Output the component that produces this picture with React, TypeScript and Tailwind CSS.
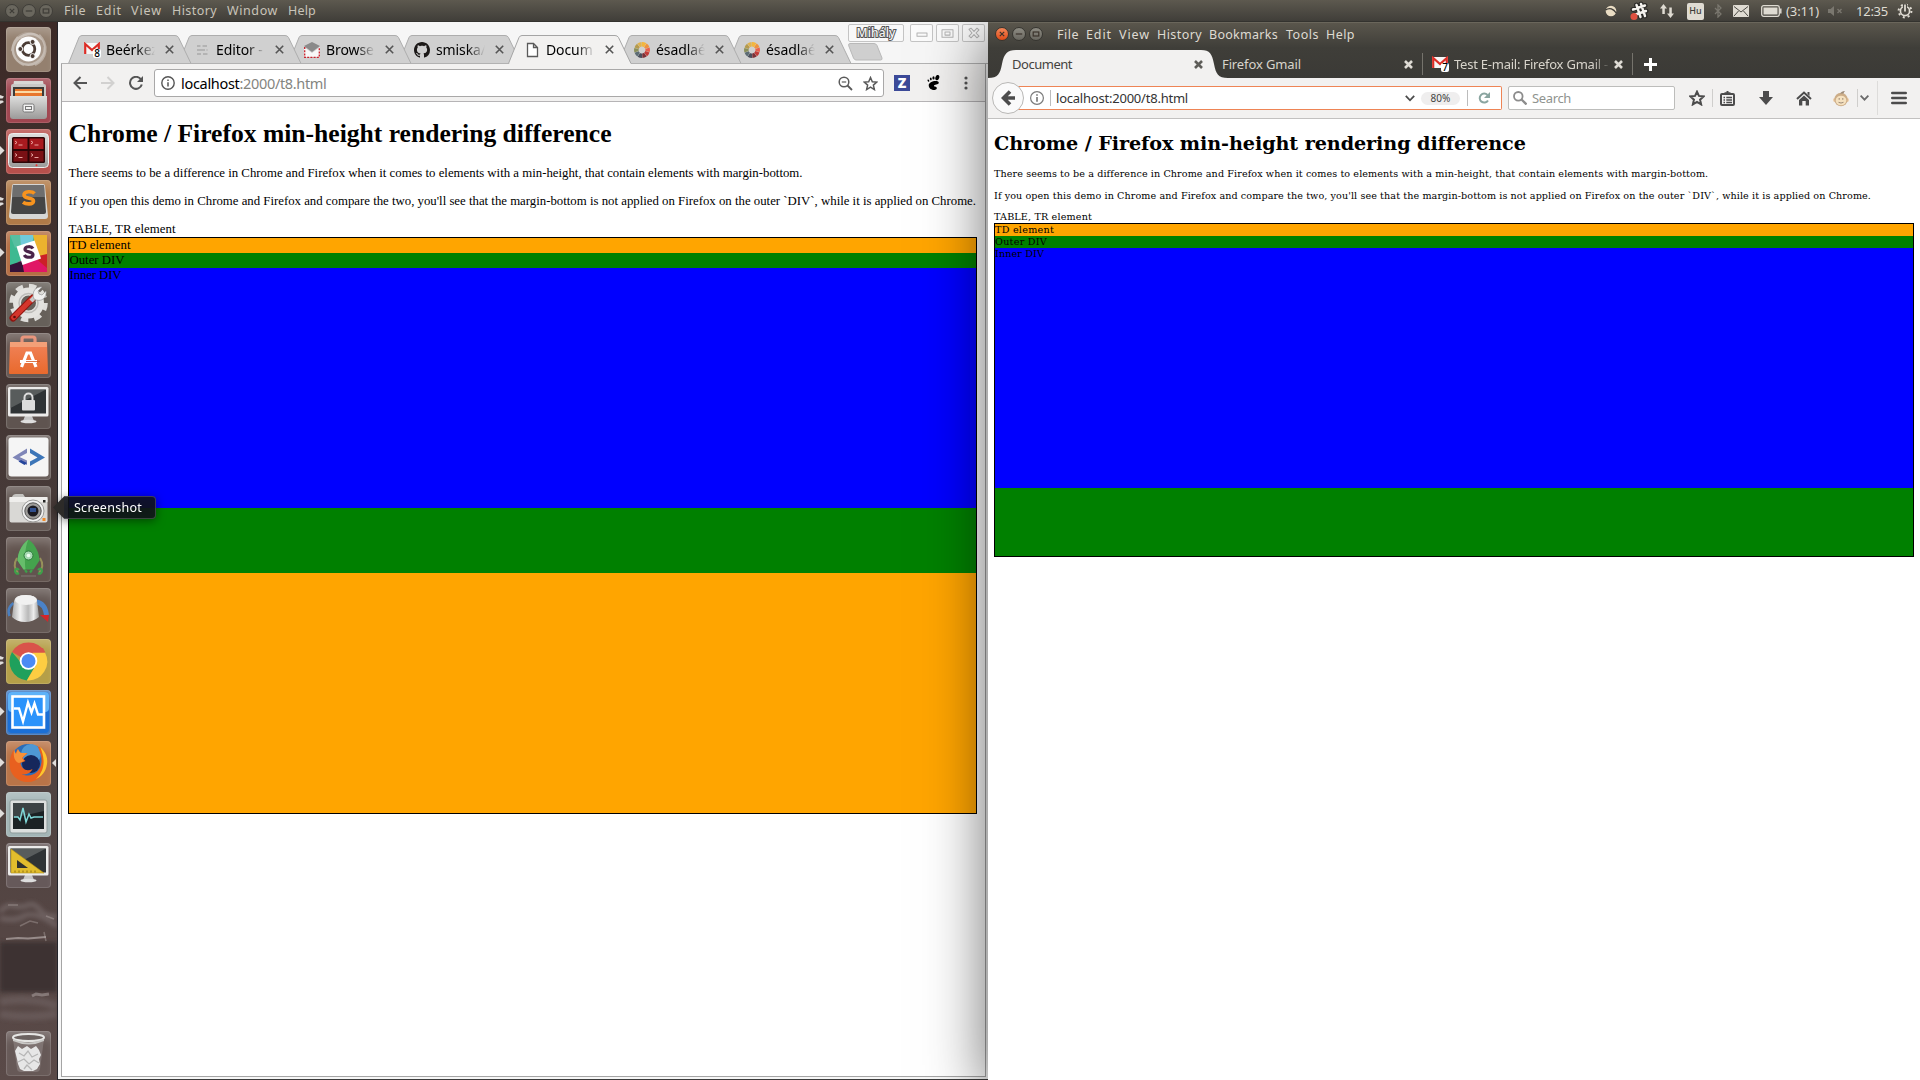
import React, { useLayoutEffect, useRef, useState } from "react";

/** Single line of text whose tracking is adjusted so that it spans `w` pixels. */
function Fit({ w, children, className = "" }: { w: number; children: string; className?: string }) {
  const ref = useRef<HTMLSpanElement>(null);
  const [ls, setLs] = useState(0);
  useLayoutEffect(() => {
    if (ref.current) {
      const natural = ref.current.getBoundingClientRect().width;
      setLs((w - natural) / children.length);
    }
  }, []);
  return (
    <span ref={ref} className={"inline-block whitespace-pre " + className} style={{ letterSpacing: ls + "px" }}>
      {children}
    </span>
  );
}

function WindowButtons({ active = false }: { active?: boolean }) {
  return (
    <svg width="50" height="16" viewBox="0 0 50 16" fill="none">
      <defs>
        <linearGradient id="closeOrange" x1="0" y1="0" x2="0" y2="1">
          <stop offset="0" stopColor="#f58a5c" />
          <stop offset="1" stopColor="#dd4814" />
        </linearGradient>
        <linearGradient id="btnGrey" x1="0" y1="0" x2="0" y2="1">
          <stop offset="0" stopColor="#8f8d84" />
          <stop offset="1" stopColor="#67655e" />
        </linearGradient>
      </defs>
      {[8, 25, 42].map((cx, i) => (
        <circle
          key={cx}
          cx={cx}
          cy="8"
          r="6.5"
          fill={active ? (i === 0 ? "url(#closeOrange)" : "url(#btnGrey)") : "#6a675e"}
          stroke={active ? "#35342f" : "#3f3d38"}
        />
      ))}
      <g stroke={active ? "#3b332c" : "#3f3d38"} strokeWidth="1.2">
        <path d="M5.8 5.8l4.4 4.4M10.2 5.8l-4.4 4.4" />
        <path d="M21.8 8h6.4" />
        <rect x="39.2" y="6" width="5.6" height="4" />
      </g>
    </svg>
  );
}

function Tray() {
  return (
    <div className="flex h-[20px] items-center">
      <div className="w-[27px]">
        <svg width="14" height="14" viewBox="0 0 14 14">
          <circle cx="7" cy="7" r="5.3" fill="#e9dcc3" />
          <path d="M1.6 6c4-3 8-1 10.6 3" stroke="#3f3d38" strokeWidth="1.3" fill="none" />
        </svg>
      </div>
      <div className="w-[29px]">
        <svg className="-ml-[2px]" width="20" height="20" viewBox="0 0 20 20">
          <g stroke="#2b2a27" strokeWidth="5" strokeLinecap="round">
            <path d="M7.5 4l4 12M12 3l4 12M4 8.500l12-4M5 14l12-4" />
          </g>
          <g stroke="#f4f2ee" strokeWidth="2.400" strokeLinecap="round">
            <path d="M7.500 4l4 12M12 3l4 12M4 8.500l12-4M5 14l12-4" />
          </g>
          <circle cx="5" cy="15.500" r="3.500" fill="#e05040" />
        </svg>
      </div>
      <div className="w-[27px]">
        <svg className="-ml-[1px]" width="16" height="16" viewBox="0 0 16 16" fill="#dfdbd2">
          <path d="M4.500 1L8 5.500H5.800V11H3.300V5.500H1zM11.500 15L15 10.500H12.800V4.500H10.300V10.500H8z" />
        </svg>
      </div>
      <div className="w-[27px]">
        <div className="flex h-[17px] w-[17px] items-center justify-center rounded-[2px] bg-[#dfdbd2] text-[9px] font-medium text-[#3c3b37]">
          Hu
        </div>
      </div>
      <div className="w-[19px]">
        <svg width="8" height="14" viewBox="0 0 8 14" fill="none" stroke="#7a776f" strokeWidth="1.300">
          <path d="M1 4l6 6-3 3V1l3 3-6 6" />
        </svg>
      </div>
      <div className="w-[28px]">
        <svg width="16" height="12" viewBox="0 0 16 12">
          <rect width="16" height="12" rx="1" fill="#dfdbd2" />
          <path d="M1 1.500l7 5.500 7-5.500M1 11l4.500-5M15 11l-4.500-5" stroke="#4a4842" fill="none" />
        </svg>
      </div>
      <div className="w-[25px]">
        <svg width="21" height="12" viewBox="0 0 21 12" fill="none">
          <rect x=".7" y=".7" width="17.600" height="10.600" rx="2" stroke="#dfdbd2" strokeWidth="1.300" />
          <rect x="2.500" y="2.500" width="14" height="7" fill="#dfdbd2" />
          <path d="M19.800 3.500v5" stroke="#dfdbd2" strokeWidth="1.500" />
        </svg>
      </div>
      <div className="w-[42px]">
        <Fit w={33}>(3:11)</Fit>
      </div>
      <div className="w-[28px]">
        <svg width="16" height="12" viewBox="0 0 16 12">
          <path d="M0 4h2.500L6 1v10L2.500 8H0z" fill="#7a776f" />
          <path d="M9.500 4l4 4M13.500 4l-4 4" stroke="#7a776f" strokeWidth="1.400" />
        </svg>
      </div>
      <div className="w-[41px]">
        <Fit w={32}>12:35</Fit>
      </div>
      <svg width="16" height="16" viewBox="0 0 16 16" fill="none" stroke="#dfdbd2">
        <circle cx="8" cy="8" r="4.600" strokeWidth="1.700" />
        <circle cx="8" cy="8" r="6.400" strokeWidth="2" strokeDasharray="2 3.030" />
        <path d="M8 1v7" stroke="#4a4842" strokeWidth="4" />
        <path d="M8 1.500V8.500" strokeWidth="1.800" />
      </svg>
    </div>
  );
}

function TopBar() {
  return (
    <header className="flex h-[22px] shrink-0 border-b border-[#34332f] bg-linear-to-b from-[#5d594f] to-[#403e39] pt-px text-[12.5px] leading-[20px] text-[#c9c4b9]">
      <div className="ml-[4px] flex h-[19px] w-[60px] items-center">
        <WindowButtons />
      </div>
      <div className="w-[32px]"><Fit w={22}>File</Fit></div>
      <div className="w-[35px]"><Fit w={26}>Edit</Fit></div>
      <div className="w-[41px]"><Fit w={31}>View</Fit></div>
      <div className="w-[55px]"><Fit w={45}>History</Fit></div>
      <div className="w-[61px]"><Fit w={51}>Window</Fit></div>
      <div><Fit w={28}>Help</Fit></div>
      <div className="ml-auto mr-[7px] w-[309px] text-[13px] text-[#dfdbd2]">
        <Tray />
      </div>
    </header>
  );
}

/* ---------- Launcher ---------- */

const ubuntu = (
  <>
    <circle cx="22.500" cy="22" r="17" fill="#fff" opacity=".18" />
    <path d="M6 24C8 8 26 2 36 12M39 20c0 14-14 22-26 15M12 10c-10 12-4 24 6 28M33 8c10 10 8 24-4 30" stroke="#fff" strokeOpacity=".35" strokeWidth="2.500" fill="none" />
    <circle cx="22.500" cy="22" r="12.500" fill="#fdfdfd" />
    <circle cx="22.500" cy="22" r="6.300" fill="none" stroke="#4a3b34" strokeWidth="2.800" />
    <g fill="#4a3b34" stroke="#fdfdfd" strokeWidth="1">
      <circle cx="14.300" cy="22" r="2.500" />
      <circle cx="26.600" cy="14.900" r="2.500" />
      <circle cx="26.600" cy="29.100" r="2.500" />
    </g>
  </>
);

const files = (
  <>
    <path d="M8 3h29l3 16H5z" fill="#d8d7d5" />
    <rect x="5" y="6" width="35" height="15" rx="2" fill="#c9c8c6" />
    <rect x="7" y="9" width="31" height="10" fill="#3c3a38" />
    <rect x="9" y="11" width="27" height="8" fill="#e8762c" />
    <rect x="9" y="13" width="27" height="2" fill="#fbd9a4" />
    <path d="M4 18h37v20a3 3 0 0 1-3 3H7a3 3 0 0 1-3-3z" fill="url(#metal)" />
    <rect x="17" y="26" width="11" height="8" rx="1.500" fill="#f2f2f2" stroke="#777" />
    <rect x="19.500" y="28.500" width="6" height="3" fill="none" stroke="#777" />
  </>
);

const terminals = (
  <>
    <rect x="2.500" y="4.500" width="40" height="34" rx="4" fill="url(#metal)" stroke="#eee" />
    <rect x="6" y="8" width="33" height="26" rx="1.500" fill="#2c0507" />
    <g fill="#a81a1f">
      <rect x="7.500" y="9.500" width="14" height="10.500" />
      <rect x="23.500" y="9.500" width="14" height="10.500" />
    </g>
    <g fill="#7a1014">
      <rect x="7.500" y="22" width="14" height="10.500" />
      <rect x="23.500" y="22" width="14" height="10.500" />
    </g>
    <path d="M9 12l2 1.500-2 1.500M12.500 16h4M25 12l2 1.500-2 1.500M28.500 16h4M9 24.500l2 1.500-2 1.500M12.500 28.500h4M25 24.500l2 1.500-2 1.500M28.500 28.500h4" stroke="#f5b5b0" strokeWidth=".9" fill="none" />
    <circle cx="30.500" cy="36.300" r="1" fill="#e33" />
  </>
);

const sublime = (
  <>
    <path d="M6 6q0-2 2-2h29q2 0 2 2l3 30q0 3-3 3H6q-3 0-3-3z" fill="#d6d6d4" />
    <path d="M7 5h31l2 27q0 2-2 2H7q-2 0-2-2z" fill="#454545" />
    <path d="M7 5h31l1 12H6z" fill="#8a8a8a" opacity=".6" />
    <path d="M28.500 13.500c-2-2.200-10.500-2.800-10.500 1.500 0 4.600 10 2 9.500 6.200-.4 3.600-7.500 3.200-10.500 1" stroke="#f7931e" strokeWidth="3.600" fill="none" />
  </>
);

const slack = (
  <>
    <rect x="4" y="4" width="37" height="37" rx="2" fill="#3eb991" />
    <path d="M4 4h12l2 10-9 3z" fill="#57bfa0" />
    <path d="M14 4h14l-2 9-11 3z" fill="#70cadb" />
    <path d="M27 4h14v22l-8 3-4-16z" fill="#ecb22e" />
    <path d="M12 31l21-6 8 3v13H16z" fill="#e01765" />
    <path d="M4 34l12-4 2 11H4z" fill="#361238" />
    <path d="M28 26l13-3v14z" fill="#cc2027" />
    <path d="M10.500 15.500l18-6 6.500 18-18.500 6.500z" fill="#fff" />
    <path d="M27 17.500c-1.500-2.500-8-2.500-8 .8 0 3.500 8 1.600 8 5.400 0 3.500-7 3.300-8.700.2" stroke="#4b244a" strokeWidth="3.200" fill="none" />
  </>
);

const settings = (
  <>
    <circle cx="22.500" cy="21" r="16.300" fill="none" stroke="#deddda" strokeWidth="6" strokeDasharray="7 5.800" />
    <circle cx="22.500" cy="21" r="11.500" fill="none" stroke="#e3e2df" strokeWidth="8" />
    <circle cx="22.500" cy="21" r="9.500" fill="none" stroke="#bdbcb9" strokeWidth="1.500" />
    <path d="M7 36L27 16" stroke="#8e1510" strokeWidth="7" strokeLinecap="round" />
    <path d="M7.500 35.500L27 16" stroke="#d4362c" strokeWidth="5" strokeLinecap="round" />
    <path d="M25 19l6-6" stroke="#c9c9c9" strokeWidth="4.500" />
    <path d="M28 17c-3-7 2-13 8-12l-4 4 1 3 3 1 4-4c1 7-5 12-12 8z" fill="#efefef" stroke="#999" strokeWidth=".7" />
    <circle cx="8.500" cy="35" r="1.300" fill="#5c0d0a" />
  </>
);

const software = (
  <>
    <path d="M16 13V6q0-2 2-2h9q2 0 2 2v7" stroke="#e8957c" strokeWidth="3.200" fill="none" />
    <path d="M4 9h37l1 31q0 1-1 1H4q-1 0-1-1z" fill="url(#bag)" />
    <path d="M4 9h37v5H4z" fill="#f3a078" />
    <path d="M15.500 34l5.500-14h3.500l5.500 14M14 28.500h17" stroke="#fff" strokeWidth="3.200" fill="none" />
    <path d="M20 28.500h14" stroke="#d4551e" strokeWidth=".8" />
  </>
);

const monitorBase = (
  <>
    <path d="M19 32h7l2 5h-11z" fill="#c6c6c6" />
    <ellipse cx="22.500" cy="37.500" rx="8" ry="1.800" fill="#dedede" />
    <rect x="2" y="3" width="40.500" height="29.500" rx="1.500" fill="#ecebea" />
    <rect x="4.500" y="5.500" width="35.500" height="24" fill="#2f3335" />
    <path d="M4.500 5.500H40L4.500 24z" fill="#6a6d6e" opacity=".7" />
  </>
);

const lock = (
  <>
    {monitorBase}
    <rect x="16" y="16" width="13" height="10.500" rx="1" fill="#dcdcdc" />
    <path d="M18.500 16v-2.500a4 4 0 0 1 8 0V16" stroke="#dcdcdc" strokeWidth="2" fill="none" />
  </>
);

const code = (
  <>
    <rect x="2.500" y="2.500" width="40" height="39" rx="3" fill="#f5f5f5" />
    <path d="M21 13.500L6.500 22.500 21 30v-4.500l-7.500-3.500L21 18z" fill="#7f86b8" />
    <path d="M18.500 30l-6-3.500 2.500-1.500 6 3z" fill="#24459c" />
    <path d="M24 13.500L39 22.500 24 31v-4.500l7.500-4L24 18z" fill="#3d76b8" />
  </>
);

const camera = (
  <>
    <rect x="3.500" y="11" width="38" height="25.500" rx="2" fill="#d9d8d5" />
    <path d="M6 11q1-3 4-3h7l2 3z" fill="#c3c2bf" />
    <rect x="3.500" y="11" width="38" height="5" fill="#efeeec" />
    <circle cx="27" cy="25" r="11" fill="#f2f2f2" stroke="#9a9a98" />
    <circle cx="27" cy="25" r="8.200" fill="#9d9c99" stroke="#555" />
    <circle cx="27" cy="25" r="5.500" fill="#1b1b22" />
    <rect x="24" y="22" width="6" height="4" fill="#31508f" />
    <rect x="37" y="14" width="2.500" height="2.500" fill="#222" />
    <rect x="36.500" y="32" width="3" height="3" fill="#f08a2a" />
  </>
);

const rocket = (
  <>
    <path d="M11 21q-5 8 1 15M34 21q5 8-1 15" stroke="#96905a" strokeWidth="2" fill="none" />
    <path d="M22.500 2.500c8 6 10.500 14 11 21l-6 9h-10l-6-9c.5-7 3-15 11-21z" fill="#44a34d" />
    <path d="M22.500 2.500c-4 8-4 22-3 30h-2l-6-9c.5-7 3-15 11-21z" fill="#66bd6b" />
    <circle cx="22.500" cy="18.500" r="4.500" fill="#a7d8b2" stroke="#2c7c3a" />
    <circle cx="22.500" cy="18.500" r="1.800" fill="#eefbf0" />
    <path d="M13 33q-3-3-4 1 1 4 4 2M32 33q3-3 4 1-1 4-4 2M19 33l2 2.500M26 33l-2 2.500" stroke="#3da04a" strokeWidth="2.200" fill="none" />
    <path d="M15 39h15" stroke="#8b8583" strokeWidth="1.500" opacity=".5" />
  </>
);

const hat = (
  <>
    <path d="M3.500 28q-3-8 4-13" stroke="#4a7fc0" strokeWidth="2.500" fill="none" />
    <path d="M30 14q9 1 10.500 13" stroke="#4a82c8" strokeWidth="5" fill="none" />
    <path d="M34 27h9l-1 7z" fill="#d2262a" />
    <path d="M8 13Q9 7 19 7q12 0 12 6l2 16q-6 5-14 5T6 29z" fill="url(#silver)" />
    <ellipse cx="20" cy="12" rx="11" ry="5" fill="#f1f1f1" />
  </>
);

const chrome = (
  <>
    <path d="M22.500 22.500L6 13A19 19 0 0 1 39 13z" fill="#d9534a" />
    <path d="M6 13A19 19 0 0 0 20.800 41.400L29 27 14 22.500z" fill="#1fa05c" />
    <path d="M39 13.500A19 19 0 0 1 20.800 41.400L29.500 27l-3-13.500z" fill="#fdcd42" />
    <path d="M22.500 13.500H39.300L37 9z" fill="#d9534a" />
    <circle cx="22.500" cy="22" r="8.800" fill="#fff" />
    <circle cx="22.500" cy="22" r="7" fill="#4b8af4" />
  </>
);

const vitals = (
  <>
    <rect x="2" y="2" width="41" height="41" rx="4" fill="#1b6fd6" />
    <rect x="2" y="2" width="41" height="20" rx="4" fill="#5eb2f8" />
    <rect x="6.500" y="6.500" width="31.500" height="31" fill="#2b93fb" stroke="#fff" strokeWidth="2.600" />
    <path d="M8 18.500h5l4 13 5-19 3.500 10 3-9 3.500 11h5" stroke="#fff" strokeWidth="2.400" fill="none" />
  </>
);

const firefox = (
  <>
    <circle cx="22.500" cy="21" r="18" fill="#2a6cb8" />
    <circle cx="25" cy="13" r="10" fill="#67b6e8" opacity=".6" />
    <circle cx="25" cy="23" r="9" fill="#16275c" />
    <path d="M34 6c6 5 8 11 7 17-2 11-10 18-19 18C11 41 3 33 3.500 22c.2-5 2-9 4-13l2 4 2-5c1 2 2 4 4 4l6 0c-1 2-4 3-5 5l3 3-5 2c1 6 6 9 12 6-2 5-9 7-12 4 8 6 20 1 21-11 .4-5-1-9-3.500-15z" fill="#e8601f" />
    <path d="M34 6c6 5 8 11 7 17-1 8-6 13-11 15 6-6 8-12 7.500-19-.3-5-1.500-9-3.500-13z" fill="#fcc62f" />
    <path d="M8 9l2 4 2-5c1 2 2 4 4 4h5c-1 2-4 3-5 5l2 3-5 2c-4-1-6-6-5-13z" fill="#f6923a" />
  </>
);

const monitor = (
  <>
    <rect x="4" y="8" width="37" height="33" rx="2" fill="#dcdfde" stroke="#8f9b9b" />
    <rect x="7" y="11" width="31" height="26" fill="#1b2224" />
    <path d="M7 11h31v8L7 26z" fill="#535a5b" opacity=".6" />
    <path d="M8 25h4l2 3 3-12 3 14 3-8 2 4 3-1h9" stroke="#7fd8d8" strokeWidth="1.500" fill="none" />
  </>
);

const drafting = (
  <>
    {monitorBase}
    <path d="M5 6v24h33z" fill="#e2bd2d" stroke="#b08d14" strokeWidth=".6" />
    <path d="M11 17v8h11z" fill="#30322f" />
    <path d="M9 29.500v-2M13 29.500v-2M17 29.500v-2M21 29.500v-2M25 29.500v-2M29 29.500v-2" stroke="#8d7010" />
  </>
);

const trash = (
  <>
    <path d="M7 8h31l-4 30q-.5 3-4 3H15q-3.500 0-4-3z" fill="#fff" opacity=".16" />
    <path d="M9 20l3-5 4 3 5-3 4 3 5-3 3 4 2 5-2 4 1 5-3 5-4 2h-9l-4-2-2-5-1-5z" fill="#e6e6e6" />
    <path d="M13 22l5 3 4-5 4 6 6-3M12 31l6-3 5 5 5-4 5 3M18 38l3-4 5 5" stroke="#b6b6b6" strokeWidth="1.300" fill="none" />
    <ellipse cx="22.500" cy="6.500" rx="15.500" ry="3.600" fill="#6b6260" stroke="#e6e6e4" strokeWidth="2" />
    <path d="M7 8q15 7 31 0v2q-15 7-31 0z" fill="#c9c8c6" />
  </>
);

type Entry = { art: React.ReactNode; bg: string; pips?: 1 | 2; focus?: boolean };

const entries: Entry[] = [
  { art: ubuntu, bg: "bg-[#94806f]" },
  { art: files, bg: "bg-[#a04650]", pips: 2 },
  { art: terminals, bg: "bg-[#b8504c]", pips: 1 },
  { art: sublime, bg: "bg-[#b07a48]", pips: 2 },
  { art: slack, bg: "bg-[#b56f45]", pips: 1 },
  { art: settings, bg: "bg-[#66605a]" },
  { art: software, bg: "bg-[#665853]" },
  { art: lock, bg: "bg-[#5f5450]" },
  { art: code, bg: "bg-[#6a5f5b]" },
  { art: camera, bg: "bg-[#655a56]" },
  { art: rocket, bg: "bg-[#62544f]" },
  { art: hat, bg: "bg-[#645854]" },
  { art: chrome, bg: "bg-[#b59f48]", pips: 2 },
  { art: vitals, bg: "bg-[#3f78c0]", pips: 1 },
  { art: firefox, bg: "bg-[#b97448]", pips: 1, focus: true },
  { art: monitor, bg: "bg-[#a3b5b6]", pips: 1 },
  { art: drafting, bg: "bg-[#66595a]" },
];

function Tile({ art, bg, pips, focus }: Entry) {
  return (
    <div className="relative h-[45px] w-[57px] shrink-0 pl-[6px]">
      {pips === 1 && (
        <svg className="absolute left-0 top-[17px]" width="5" height="9" viewBox="0 0 5 9">
          <path d="M0 0l4.500 4.500L0 9z" fill="#e0dddb" />
        </svg>
      )}
      {pips === 2 && (
        <svg className="absolute left-0 top-[17px]" width="5" height="9" viewBox="0 0 5 9">
          <path d="M0 0l4 1.500L2.500 3.500H0zM0 5.500h2.500L4 7 0 9z" fill="#e0dddb" />
        </svg>
      )}
      <div className={"h-[45px] w-[45px] overflow-hidden rounded-[4px] shadow-[inset_0_0_0_1px_rgba(255,255,255,0.13),inset_0_10px_10px_-4px_rgba(255,255,255,0.22)] " + bg}>
        <svg width="45" height="45" viewBox="0 0 45 45">
          {art}
        </svg>
      </div>
      {focus && (
        <svg className="absolute right-[1px] top-[18px]" width="4" height="8" viewBox="0 0 4 8">
          <path d="M4 0L0 4l4 4z" fill="#e0dddb" />
        </svg>
      )}
    </div>
  );
}

function Launcher() {
  return (
    <aside className="relative flex h-[1058px] w-[58px] shrink-0 flex-col gap-[6px] border-r border-[#23242a] bg-linear-to-b from-[#3c2a27] via-[#483c3a] to-[#5a4a48] pt-[5px]">
      <svg className="absolute left-0 top-[870px]" width="57" height="188" viewBox="0 0 57 188">
        <defs>
          <filter id="soft" x="-20%" y="-50%" width="140%" height="200%">
            <feGaussianBlur stdDeviation="2.2" />
          </filter>
          <filter id="fine" x="-20%" y="-50%" width="140%" height="200%">
            <feGaussianBlur stdDeviation=".7" />
          </filter>
        </defs>
        <g filter="url(#soft)">
          <rect x="0" y="50" width="57" height="50" fill="#3d3331" />
          <path d="M0 20q6-8 14-6t14-1 12 5 17 6M0 26q14 4 24-2t33 10" stroke="#7d706f" strokeWidth="5" fill="none" opacity=".6" />
          <path d="M0 110q30-6 57 4M0 122q26 5 57 0" stroke="#6f6463" strokeWidth="8" fill="none" opacity=".6" />
        </g>
        <g filter="url(#fine)" stroke="#b3aaa8" fill="none">
          <path d="M6 47l12-1 10 .5 18-1.500" strokeWidth="1.800" opacity=".7" />
          <path d="M32 104l4-2 6 1 7-1" strokeWidth="3" opacity=".5" />
          <path d="M8 13h10M20 34l10-5 8 2M46 24l8 3M44 40l2 9" strokeWidth="1.500" opacity=".4" />
        </g>
      </svg>
      <svg className="absolute h-0 w-0">
        <defs>
          <linearGradient id="metal" x1="0" y1="0" x2="0" y2="1">
            <stop offset="0" stopColor="#dededd" />
            <stop offset="1" stopColor="#9b9a99" />
          </linearGradient>
          <linearGradient id="bag" x1="0" y1="0" x2="0" y2="1">
            <stop offset="0" stopColor="#f0835a" />
            <stop offset="1" stopColor="#e9692c" />
          </linearGradient>
          <linearGradient id="silver">
            <stop offset="0" stopColor="#aaa" />
            <stop offset=".3" stopColor="#f3f3f3" />
            <stop offset=".6" stopColor="#b9b9b9" />
            <stop offset=".8" stopColor="#eee" />
            <stop offset="1" stopColor="#999" />
          </linearGradient>
        </defs>
      </svg>
      {entries.map((e, i) => (
        <Tile key={i} {...e} />
      ))}
      <div className="mt-auto mb-[4px]">
        <Tile art={trash} bg="bg-[#6f646299]" />
      </div>
      <div className="absolute left-[53px] top-[474px] z-30 flex items-center drop-shadow-[0_2px_5px_rgba(0,0,0,0.5)]">
        <svg width="11" height="23" viewBox="0 0 11 23">
          <path d="M0 11.500L11 0.500V22.500z" fill="#2d2b29" />
        </svg>
        <div className="h-[23px] w-[92px] rounded-r-[4px] border border-l-0 border-[#ffffff30] bg-[#11131ae0] pl-[10px] text-[12.500px] leading-[21px] text-white">
          <Fit w={68}>Screenshot</Fit>
        </div>
      </div>
    </aside>
  );
}

/* ---------- Chrome ---------- */

function GmailIcon({ n }: { n: string }) {
  return (
    <div className="relative h-[16px] w-[16px]">
      <svg width="16" height="16" viewBox="0 0 16 16">
        <path d="M0 1h16v11H0z" fill="#f6f6f6" />
        <path d="M1.200 12V2l6.800 6 6.800-6v10" stroke="#dc2d26" strokeWidth="2.200" fill="none" />
      </svg>
      <span className="absolute -right-[1px] top-[7px] rounded-[2px] bg-white px-[1px] text-[10px] font-medium leading-[9px] text-black">{n}</span>
    </div>
  );
}

const wheel = (
  <svg width="16" height="16" viewBox="0 0 16 16" fill="none" strokeWidth="4.500">
    {["#f4b63c", "#f0933b", "#e8604c", "#c23b38", "#7b3137", "#4a4f5c", "#5c6b73", "#8a8f5a", "#b59b4e", "#e0b350"].map((c, i) => (
      <circle key={c} cx="8" cy="8" r="5.700" stroke={c} strokeDasharray="3.300 40" transform={`rotate(${i * 36 - 90} 8 8)`} />
    ))}
  </svg>
);

const chromeTabs: { icon: React.ReactNode; label: string }[] = [
  { icon: <GmailIcon n="8" />, label: "Beérkez" },
  {
    icon: (
      <svg width="16" height="16" viewBox="0 0 16 16" stroke="#a9a9a9" strokeWidth="1.600">
        <path d="M3 4h3.500M8.500 4H13M3 8h8M12.500 8h1M3 12h4M9 12h4.500" />
      </svg>
    ),
    label: "Editor - ",
  },
  {
    icon: (
      <svg width="16" height="16" viewBox="0 0 16 16">
        <path d="M0 4l8-4 8 4-8 6z" fill="#8a8a8a" />
        <path d="M0 5l8 6 8-6v10H0z" fill="#fff" opacity=".85" />
        <path d="M.7 5v10.300h14.600V5" stroke="#c9202a" strokeWidth="1.300" strokeDasharray="2 1.200" fill="none" />
      </svg>
    ),
    label: "Browse",
  },
  {
    icon: (
      <svg width="16" height="16" viewBox="0 0 16 16" fill="#1b1817">
        <path d="M8 0C3.580 0 0 3.580 0 8c0 3.540 2.290 6.530 5.470 7.590.4.070.55-.17.55-.38 0-.19-.01-.82-.01-1.490-2.010.37-2.530-.49-2.690-.94-.09-.23-.48-.94-.82-1.130-.28-.15-.68-.52-.01-.53.63-.01 1.080.58 1.230.82.72 1.210 1.870.87 2.330.66.07-.52.28-.87.51-1.070-1.780-.2-3.640-.89-3.640-3.950 0-.87.31-1.590.82-2.150-.08-.2-.36-1.020.08-2.120 0 0 .67-.21 2.200.82.64-.18 1.320-.27 2-.27s1.360.09 2 .27c1.530-1.040 2.200-.82 2.200-.82.44 1.100.16 1.920.08 2.120.51.56.82 1.270.82 2.150 0 3.070-1.870 3.750-3.650 3.950.29.25.54.73.54 1.480 0 1.070-.01 1.930-.01 2.200 0 .21.15.46.55.38A8.010 8.010 0 0 0 16 8c0-4.420-3.580-8-8-8z" />
      </svg>
    ),
    label: "smiska/",
  },
  {
    icon: (
      <svg width="16" height="16" viewBox="0 0 16 16" fill="#fff" stroke="#5a5a5a" strokeWidth="1.300">
        <path d="M3.500 1.500h6l4 4v9h-10zM9.500 1.500v4h4" />
      </svg>
    ),
    label: "Docum",
  },
  { icon: wheel, label: "ésadlaé" },
  { icon: wheel, label: "ésadlaé" },
];

const layers = ["z-[7]", "z-[6]", "z-[5]", "z-[4]", "z-10", "z-[2]", "z-[1]"];

function ChromeTab({ icon, label, i }: { icon: React.ReactNode; label: string; i: number }) {
  const on = i === 4;
  return (
    <div className={"relative flex h-[29px] w-[110px] shrink-0 items-center pl-[16px] " + layers[i]}>
      <svg className="absolute left-0 top-0" width="124" height="29" viewBox="0 0 124 29">
        <path
          d="M.5 28.500L11 2.500Q12 .5 14 .5H107Q109.500 .5 110.500 2.500L123 28.500"
          fill={on ? "#f2f1f0" : "#d0d0d0"}
          stroke={on ? "#a5a5a5" : "#adadad"}
        />
        {on && <path d="M1.500 28.500h121" stroke="#f2f1f0" strokeWidth="1.200" />}
      </svg>
      <div className="relative flex items-center">
        {icon}
        <div className="ml-[6px] w-[50px] whitespace-pre text-[14px] leading-[20px] tracking-[-0.100px] text-black [mask-image:linear-gradient(to_right,black_62%,transparent_98%)]">
          {label}
        </div>
        <svg className="ml-[9px]" width="9" height="9" viewBox="0 0 9 9" stroke="#555" strokeWidth="1.600">
          <path d="M.8.8l7.400 7.400M8.200.8L.8 8.200" />
        </svg>
      </div>
    </div>
  );
}

function ChromeToolbar() {
  return (
    <div className="flex h-[38px] items-center border-b border-[#b6b4b6] bg-[#f2f1f0]">
      <svg className="ml-[11px]" width="14" height="14" viewBox="0 0 14 14" fill="none" stroke="#555" strokeWidth="2">
        <path d="M14 7H1.500M7.500 1L1.500 7l6 6" />
      </svg>
      <svg className="ml-[14px]" width="14" height="14" viewBox="0 0 14 14" fill="none" stroke="#d2d1d0" strokeWidth="2">
        <path d="M0 7h12.500M6.500 1l6 6-6 6" />
      </svg>
      <svg className="ml-[14px]" width="14" height="14" viewBox="0 0 14 14">
        <path d="M11.800 3.200A6 6 0 1 0 12.800 8.500" fill="none" stroke="#555" strokeWidth="2" />
        <path d="M14 0v6H8z" fill="#555" />
      </svg>
      <div className="ml-[11px] mt-px flex h-[28px] w-[730px] items-center rounded-[3px] border border-[#a9a8a8] bg-white">
        <svg className="ml-[6px]" width="14" height="14" viewBox="0 0 14 14" fill="none" stroke="#555">
          <circle cx="7" cy="7" r="6.200" strokeWidth="1.400" />
          <path d="M7 6.200V10.500M7 3.500v1.500" strokeWidth="1.500" />
        </svg>
        <div className="ml-[6px] text-[14.500px] leading-[26px] text-black">
          <Fit w={58.500}>localhost</Fit>
          <Fit w={87} className="text-[#84857f]">:2000/t8.html</Fit>
        </div>
        <svg className="ml-auto" width="15" height="15" viewBox="0 0 15 15" fill="none" stroke="#5a5a5a">
          <circle cx="6" cy="6" r="4.800" strokeWidth="1.500" />
          <path d="M9.500 9.500L14 14" strokeWidth="1.800" />
          <path d="M3.800 6h4.400" strokeWidth="1.200" />
        </svg>
        <svg className="ml-[10px] mr-[5px]" width="15" height="15" viewBox="0 0 24 24" fill="none" stroke="#5a5a5a" strokeWidth="2.400">
          <path d="M12 2.500l2.900 6.700 7.100.6-5.400 4.800 1.600 7.100-6.200-3.800-6.200 3.800 1.600-7.100L2 9.800l7.100-.6z" />
        </svg>
      </div>
      <div className="ml-[10px] flex h-[16px] w-[16px] items-center justify-center bg-[#3c4a98] text-[14px] font-black leading-[16px] text-white">
        Z
      </div>
      <svg className="ml-[17px]" width="13" height="15" viewBox="0 0 13 15" fill="#000">
        <ellipse cx="10.300" cy="2.600" rx="1.900" ry="2.700" transform="rotate(20 10.300 2.600)" />
        <ellipse cx="6.500" cy="2.900" rx="1.100" ry="1.700" />
        <ellipse cx="3.800" cy="4" rx=".9" ry="1.400" transform="rotate(-15 3.800 4)" />
        <ellipse cx="1.400" cy="5.600" rx=".8" ry="1.200" transform="rotate(-25 1.400 5.600)" />
        <path d="M11 6.500C8 5 1.500 7 1.700 10.500c.2 3 3 4.500 5.300 4.500 2 0 3.500-1.500 2.500-2.800-.8-1-2.500-.2-2.500-1.500 0-1.500 4.500-1 4.800-2.700 0-.8-.3-1.200-.8-1.500z" />
      </svg>
      <svg className="ml-[24px]" width="4" height="14" viewBox="0 0 4 14" fill="#555">
        <circle cx="2" cy="2" r="1.600" />
        <circle cx="2" cy="7" r="1.600" />
        <circle cx="2" cy="12" r="1.600" />
      </svg>
    </div>
  );
}

function ChromeWindow() {
  return (
    <section className="flex h-[1058px] w-[930px] shrink-0 flex-col border-b border-[#3b3b3b] bg-[#f6f6f6]">
      <div className="relative flex h-[42px] shrink-0 items-end pl-[10px]">
        {chromeTabs.map((t, i) => (
          <ChromeTab key={i} {...t} i={i} />
        ))}
        <svg className="mb-[3px] ml-[10px]" width="35" height="18" viewBox="0 0 35 18">
          <path d="M2 .5H26Q28 .5 29 2.500L34 15Q34.500 17 32.500 17H8Q6.500 17 5.500 15L.8 3Q0 .5 2 .5z" fill="#cfcfcf" stroke="#b9b9b9" />
        </svg>
        <div className="absolute bottom-0 left-[3px] right-0 z-[8] h-px bg-[#b2b2b2]" />
        <div className="absolute right-[3px] top-[2px] z-20 flex items-center gap-[3px]">
          <div className="mr-[3px] flex h-[18px] w-[56px] items-center justify-center rounded-[2px] border border-[#c4c4c4] bg-[#f9f9f9] text-[12px] font-medium leading-[16px] text-[#f4f4f4] [-webkit-text-stroke:2px_#555] [paint-order:stroke_fill]">
            <Fit w={39}>Mihály</Fit>
          </div>
          {["M7 8.500h10v3H7z", "M6 5.500h11v7H6zM9 7.500h5v3H9z", "M7 5l2-1 3 3 3-3 2 1.500-3 3 3 3-2 1.500-3-3-3 3-2-1.500 3-3z"].map((d) => (
            <svg key={d} width="23" height="18" viewBox="0 0 23 17" preserveAspectRatio="none" fill="#fbfbfb" stroke="#c4c4c4">
              <rect x=".5" y=".5" width="22" height="16" rx="1.500" />
              <path d={d} stroke="#b3b3b3" strokeLinejoin="round" />
            </svg>
          ))}
        </div>
      </div>
      <div className="mb-[2px] ml-[3px] mr-[2px] flex grow flex-col border border-t-0 border-[#a5a5a5] bg-white">
        <ChromeToolbar />
        <main className="px-[6px] pt-[17px] font-['Liberation_Serif',serif] text-[12.800px] leading-[15px] text-black">
          <h1 className="pl-[0.500px] text-[25.600px] font-bold leading-[30px]">
            <Fit w={543}>Chrome / Firefox min-height rendering difference</Fit>
          </h1>
          <p className="mt-[17px] pl-[0.500px]">
            <Fit w={734}>There seems to be a difference in Chrome and Firefox when it comes to elements with a min-height, that contain elements with margin-bottom.</Fit>
          </p>
          <p className="mt-[13px] pl-[0.500px]">
            <Fit w={907.500}>If you open this demo in Chrome and Firefox and compare the two, you'll see that the margin-bottom is not applied on Firefox on the outer `DIV`, while it is applied on Chrome.</Fit>
          </p>
          <p className="mt-[13px] pl-[0.500px]">
            <Fit w={107}>TABLE, TR element</Fit>
          </p>
          <div className="h-[577px] w-[909px] border border-black bg-[#ffa500]">
            <div className="h-[15px] pl-[0.500px]"><Fit w={61}>TD element</Fit></div>
            <div className="h-[320px] bg-[#008000]">
              <div className="h-[15px] pl-[0.500px]"><Fit w={55}>Outer DIV</Fit></div>
              <div className="h-[240px] bg-[#0000ff] pl-[0.500px]"><Fit w={52}>Inner DIV</Fit></div>
            </div>
          </div>
        </main>
      </div>
    </section>
  );
}

/* ---------- Firefox ---------- */

function CloseX({ color }: { color: string }) {
  return (
    <svg width="9" height="9" viewBox="0 0 9 9" stroke={color} strokeWidth="2.600">
      <path d="M1 1l7 7M8 1L1 8" />
    </svg>
  );
}

function FirefoxTabs() {
  return (
    <div className="relative flex h-[28px] items-center text-[13px] leading-[28px] text-[#d8d4cb]">
      <svg className="absolute left-0 top-0" width="240" height="28" viewBox="0 0 240 28">
        <path d="M0 28C10 28 12 24 14 14 16 4 19 0 28 0H213C222 0 224 4 226 14 228 24 230 28 240 28z" fill="#f2f1f0" />
      </svg>
      <div className="relative ml-[24px] w-[182px] text-[#44433f]">
        <Fit w={60}>Document</Fit>
      </div>
      <div className="relative w-[28px]"><CloseX color="#5e5d59" /></div>
      <div className="w-[182px]"><Fit w={79}>Firefox Gmail</Fit></div>
      <CloseX color="#dedbd4" />
      <div className="ml-[9px] h-[22px] w-px bg-[#75736c]" />
      <div className="ml-[9px]"><GmailIcon n="7" /></div>
      <div className="ml-[6px] w-[154px] overflow-hidden [mask-image:linear-gradient(to_right,black_90%,transparent_102%)]">
        <Fit w={154}>Test E-mail: Firefox Gmail -</Fit>
      </div>
      <div className="ml-[6px] flex"><CloseX color="#dedbd4" /></div>
      <div className="ml-[9px] h-[22px] w-px bg-[#75736c]" />
      <svg className="ml-[11px]" width="13" height="13" viewBox="0 0 13 13" stroke="#fff" strokeWidth="3">
        <path d="M6.500 0v13M0 6.500h13" />
      </svg>
    </div>
  );
}

function FirefoxToolbar() {
  return (
    <div className="relative flex h-[41px] items-center border-b border-[#c2c1c0] bg-[#f2f1f0]">
      <div className="relative z-10 ml-[4px] flex h-[32px] w-[32px] items-center justify-center rounded-full border border-[#b9b8b6] bg-[#fafafa]">
        <svg width="14" height="16" viewBox="0 0 14 16" fill="none" stroke="#4c4c4c" strokeWidth="3.600">
          <path d="M14 8H3M9 1.500L2.500 8 9 14.500" />
        </svg>
      </div>
      <div className="-ml-[6px] flex h-[24px] w-[484px] items-center rounded-r-[2px] border border-l-0 border-[#ee8455] bg-white">
        <svg className="ml-[12px]" width="14" height="14" viewBox="0 0 14 14" fill="none" stroke="#7b7b7b">
          <circle cx="7" cy="7" r="6.400" strokeWidth="1.200" />
          <path d="M7 6v4.800M7 3.200v1.600" strokeWidth="1.700" />
        </svg>
        <div className="ml-[6px] h-[16px] w-px bg-[#bcbcbc]" />
        <div className="ml-[5px] text-[13px] leading-[20px] text-[#333]">
          <Fit w={132}>localhost:2000/t8.html</Fit>
        </div>
        <svg className="ml-auto" width="10" height="7" viewBox="0 0 10 7" fill="none" stroke="#4c4c4c" strokeWidth="1.800">
          <path d="M.8.8L5 5.300 9.200.8" />
        </svg>
        <div className="ml-[6px] flex h-[13px] w-[39px] items-center justify-center rounded-full bg-[#efeeee] text-[10px] leading-[13px] text-[#444]">
          <Fit w={20}>80%</Fit>
        </div>
        <div className="ml-[7px] h-[16px] w-px bg-[#bcbcbc]" />
        <svg className="ml-[10px] mr-[11px]" width="12" height="12" viewBox="0 0 12 12">
          <path d="M9.500 3A4.500 4.500 0 1 0 10 8.500" fill="none" stroke="#8aa5a0" strokeWidth="2" />
          <path d="M12 0v6H6z" fill="#8aa5a0" />
        </svg>
      </div>
      <div className="ml-[6px] flex h-[24px] w-[167px] items-center rounded-[2px] border border-[#bdbdbb] bg-white text-[13px] leading-[20px] text-[#8f938f]">
        <svg className="ml-[4px] mr-[5px]" width="14" height="14" viewBox="0 0 14 14" fill="none" stroke="#8c8c8c">
          <circle cx="5.300" cy="5.300" r="4.300" strokeWidth="1.800" />
          <path d="M8.500 8.500l5 5" strokeWidth="2.300" />
        </svg>
        <Fit w={39}>Search</Fit>
      </div>
      <svg className="ml-[14px]" width="16" height="16" viewBox="0 0 24 24" fill="none" stroke="#4c4c4c" strokeWidth="3">
        <path d="M12 2.500l2.900 6.400 7.100.8-5.400 4.800 1.600 7.100-6.200-3.700-6.200 3.700 1.600-7.100L2 9.700l7.100-.8z" />
      </svg>
      <div className="ml-[7px] h-[18px] w-px bg-[#cfcecc]" />
      <svg className="ml-[7px]" width="15" height="15" viewBox="0 0 15 15" fill="none" stroke="#4c4c4c" strokeWidth="2">
        <rect x="1" y="3" width="13" height="11" rx="1" />
        <path d="M4.500 2.500h6M6.500 1h2" strokeWidth="2.400" />
        <path d="M3.500 6.500h1.500M6.300 6.500H12M3.500 9h1.500M6.300 9H12M3.500 11.500h1.500M6.300 11.500H12" strokeWidth="1.300" />
      </svg>
      <svg className="ml-[24px]" width="14" height="14" viewBox="0 0 14 14" fill="#4c4c4c">
        <path d="M4 0h6v6h4l-7 8-7-8h4z" />
      </svg>
      <svg className="ml-[23px]" width="16" height="15" viewBox="0 0 16 15">
        <path d="M1 8l7-6.500L15 8" fill="none" stroke="#4c4c4c" strokeWidth="2" />
        <path d="M3 9l5-4.500L13 9v5.500H9.700V10H6.300v4.500H3z" fill="#4c4c4c" />
        <path d="M11.500 1h2v4l-2-2z" fill="#4c4c4c" />
      </svg>
      <svg className="ml-[21px]" width="16" height="17" viewBox="0 0 16 17" opacity=".65">
        <circle cx="2" cy="10" r="1.900" fill="#e8b273" />
        <circle cx="14" cy="10" r="1.900" fill="#e8b273" />
        <circle cx="8" cy="9.500" r="6.700" fill="#b98a52" />
        <ellipse cx="8" cy="10.500" rx="5.300" ry="4.800" fill="#f8d9a5" />
        <path d="M7 3.500q2-3 5-2.500-1 .5-1.500 2.500z" fill="#6d5338" />
        <path d="M6.200 8v1.800M9.800 8v1.800M5.500 12.300q2.500 1.500 5 0" stroke="#6d5338" fill="none" />
      </svg>
      <div className="ml-[8px] h-[18px] w-px bg-[#cfcecc]" />
      <svg className="ml-[2px]" width="9" height="6" viewBox="0 0 9 6" fill="none" stroke="#6a6a6a" strokeWidth="1.800">
        <path d="M.6.600L4.500 4.600 8.400.600" />
      </svg>
      <div className="ml-[8px] h-[34px] w-px bg-[#dddcda]" />
      <svg className="ml-[13px]" width="16" height="14" viewBox="0 0 16 14" stroke="#4c4c4c" strokeWidth="2.600" strokeLinecap="round">
        <path d="M1.300 2h13.400M1.300 7h13.400M1.300 12h13.400" />
      </svg>
    </div>
  );
}

function FirefoxWindow() {
  return (
    <section className="relative z-20 flex h-[1058px] grow flex-col bg-white shadow-[0_14px_58px_rgba(0,0,0,0.6)]">
      <div className="h-[56px] shrink-0 border-t border-[#6a665b] bg-linear-to-b from-[#5a564c] via-[#3f3e39] via-45% to-[#3b3a36]">
        <div className="flex h-[23px] items-center text-[12.500px] leading-[23px] text-[#dfdbd2] [&>div]:shrink-0">
          <div className="w-[69px] pb-px pl-[6px]"><WindowButtons active /></div>
          <div className="w-[29px]"><Fit w={22}>File</Fit></div>
          <div className="w-[33px]"><Fit w={26}>Edit</Fit></div>
          <div className="w-[38px]"><Fit w={31}>View</Fit></div>
          <div className="w-[52px]"><Fit w={45}>History</Fit></div>
          <div className="w-[77px]"><Fit w={69}>Bookmarks</Fit></div>
          <div className="w-[40px]"><Fit w={33}>Tools</Fit></div>
          <div><Fit w={29}>Help</Fit></div>
        </div>
        <div className="pt-[4px]">
          <FirefoxTabs />
        </div>
      </div>
      <FirefoxToolbar />
      <main className="px-[6px] pt-[14px] font-['DejaVu_Serif',serif] text-[9.600px] leading-[12px] text-black">
        <h1 className="text-[19.200px] font-bold leading-[22px]">
          <Fit w={531}>Chrome / Firefox min-height rendering difference</Fit>
        </h1>
        <p className="mt-[13px]">
          <Fit w={714}>There seems to be a difference in Chrome and Firefox when it comes to elements with a min-height, that contain elements with margin-bottom.</Fit>
        </p>
        <p className="mt-[10px]">
          <Fit w={877}>If you open this demo in Chrome and Firefox and compare the two, you'll see that the margin-bottom is not applied on Firefox on the outer `DIV`, while it is applied on Chrome.</Fit>
        </p>
        <p className="mt-[9px]">
          <Fit w={98}>TABLE, TR element</Fit>
        </p>
        <div className="h-[334px] border border-black bg-[#ffa500]">
          <div className="h-[12px]"><Fit w={59}>TD element</Fit></div>
          <div className="h-[320px] bg-[#008000]">
            <div className="h-[12px]"><Fit w={52}>Outer DIV</Fit></div>
            <div className="h-[240px] bg-[#0000ff]"><Fit w={49}>Inner DIV</Fit></div>
          </div>
        </div>
      </main>
    </section>
  );
}

export default function App() {
  return (
    <div className="flex h-[1080px] w-[1920px] flex-col overflow-hidden font-['Noto_Sans',sans-serif]">
      <div className="relative z-30"><TopBar /></div>
      <div className="flex">
        <div className="relative z-10"><Launcher /></div>
        <ChromeWindow />
        <FirefoxWindow />
      </div>
    </div>
  );
}
